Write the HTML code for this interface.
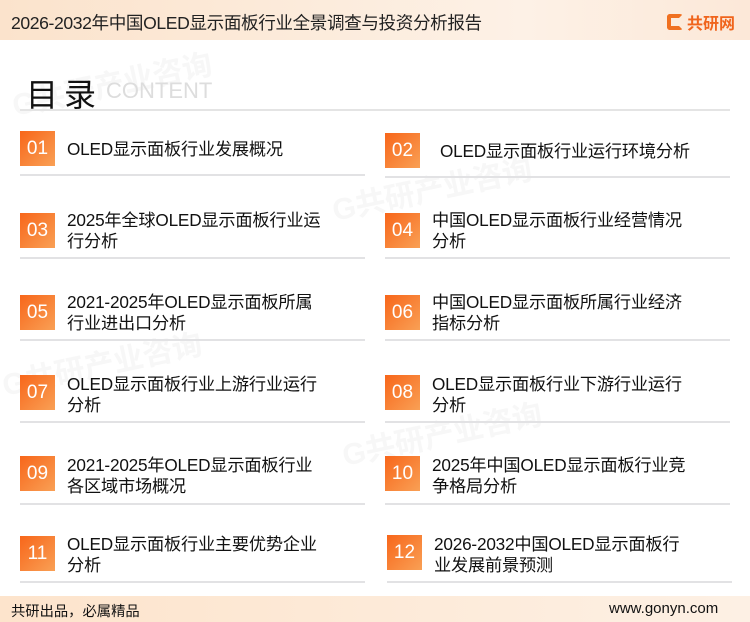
<!DOCTYPE html>
<html><head><meta charset="utf-8"><style>
*{margin:0;padding:0;box-sizing:border-box}
body{width:750px;height:622px;position:relative;background:#fff;font-family:"Liberation Sans","Noto Sans CJK SC",sans-serif;overflow:hidden;color:#111}
.hd{position:absolute;left:0;top:0;width:750px;height:40px;background:linear-gradient(90deg,#fbe3cc,#fdf1e6 70%,#fce8d8)}
.hd .t{position:absolute;left:11px;top:10px;font-size:17.6px;color:#222;letter-spacing:-0.4px;white-space:nowrap}
.logo{position:absolute;left:667px;top:10px;display:flex;align-items:center}
.logo .g{width:16px;height:16px;border:4px solid #f07020;border-right-color:transparent;border-radius:3px;position:relative}
.logo span{font-size:16px;font-weight:bold;color:#f0641c;margin-left:4px}
.ml{position:absolute;left:26px;top:70px;font-size:32px;color:#111;letter-spacing:6px}
.ct{position:absolute;left:106px;top:78px;font-size:22px;color:#ddd}
.dv{position:absolute;left:20px;top:109px;width:710px;height:2px;background:#e4e4e4}
.b{position:absolute;width:35px;height:35px;background:linear-gradient(135deg,#f8661a,#f9a055);color:#fff;font-size:19px;text-align:center;line-height:35px}
.x{position:absolute;font-size:17.2px;line-height:21px;color:#111;letter-spacing:-0.2px;white-space:nowrap}
.l{position:absolute;height:2px;background:#e2e2e4;width:345px}
.ft{position:absolute;left:0;top:596px;width:750px;height:26px;background:linear-gradient(90deg,#fde4cc,#fdf0e4)}
.ft .a{position:absolute;left:11px;top:4px;font-size:14.3px}
.ft .c{position:absolute;left:609px;top:4px;font-size:15px}
.wm{position:absolute;color:#f7f7f7;font-size:30px;font-weight:bold;transform:rotate(-12deg)}
</style></head><body>
<div class="wm" style="left:10px;top:60px">G共研产业咨询</div>
<div class="wm" style="left:330px;top:165px">G共研产业咨询</div>
<div class="wm" style="left:0;top:340px">G共研产业咨询</div>
<div class="wm" style="left:340px;top:410px">G共研产业咨询</div>
<div class="hd"><div class="t">2026-2032年中国OLED显示面板行业全景调查与投资分析报告</div>
<div class="logo"><div class="g"></div><span>共研网</span></div></div>
<div class="ml">目录</div><div class="ct">CONTENT</div>
<div class="dv"></div>

<div class="b" style="left:20px;top:131px">01</div><div class="x" style="left:67px;top:139px">OLED显示面板行业发展概况</div><div class="l" style="left:20px;top:174px"></div>
<div class="b" style="left:385px;top:133px">02</div><div class="x" style="left:440px;top:141px">OLED显示面板行业运行环境分析</div><div class="l" style="left:385px;top:176px"></div>

<div class="b" style="left:20px;top:213px">03</div><div class="x" style="left:67px;top:210px">2025年全球OLED显示面板行业运<br>行分析</div><div class="l" style="left:20px;top:257px"></div>
<div class="b" style="left:385px;top:213px">04</div><div class="x" style="left:432px;top:210px">中国OLED显示面板行业经营情况<br>分析</div><div class="l" style="left:385px;top:257px"></div>

<div class="b" style="left:20px;top:295px">05</div><div class="x" style="left:67px;top:292px">2021-2025年OLED显示面板所属<br>行业进出口分析</div><div class="l" style="left:20px;top:339px"></div>
<div class="b" style="left:385px;top:295px">06</div><div class="x" style="left:432px;top:292px">中国OLED显示面板所属行业经济<br>指标分析</div><div class="l" style="left:385px;top:339px"></div>

<div class="b" style="left:20px;top:375px">07</div><div class="x" style="left:67px;top:374px">OLED显示面板行业上游行业运行<br>分析</div><div class="l" style="left:20px;top:421px"></div>
<div class="b" style="left:385px;top:375px">08</div><div class="x" style="left:432px;top:374px">OLED显示面板行业下游行业运行<br>分析</div><div class="l" style="left:385px;top:421px"></div>

<div class="b" style="left:20px;top:456px">09</div><div class="x" style="left:67px;top:455px">2021-2025年OLED显示面板行业<br>各区域市场概况</div><div class="l" style="left:20px;top:503px"></div>
<div class="b" style="left:385px;top:456px">10</div><div class="x" style="left:432px;top:455px">2025年中国OLED显示面板行业竞<br>争格局分析</div><div class="l" style="left:385px;top:503px"></div>

<div class="b" style="left:20px;top:536px">11</div><div class="x" style="left:67px;top:534px">OLED显示面板行业主要优势企业<br>分析</div><div class="l" style="left:20px;top:581px"></div>
<div class="b" style="left:387px;top:535px">12</div><div class="x" style="left:434px;top:534px">2026-2032中国OLED显示面板行<br>业发展前景预测</div><div class="l" style="left:387px;top:581px"></div>

<div class="ft"><div class="a">共研出品，必属精品</div><div class="c">www.gonyn.com</div></div>
</body></html>
